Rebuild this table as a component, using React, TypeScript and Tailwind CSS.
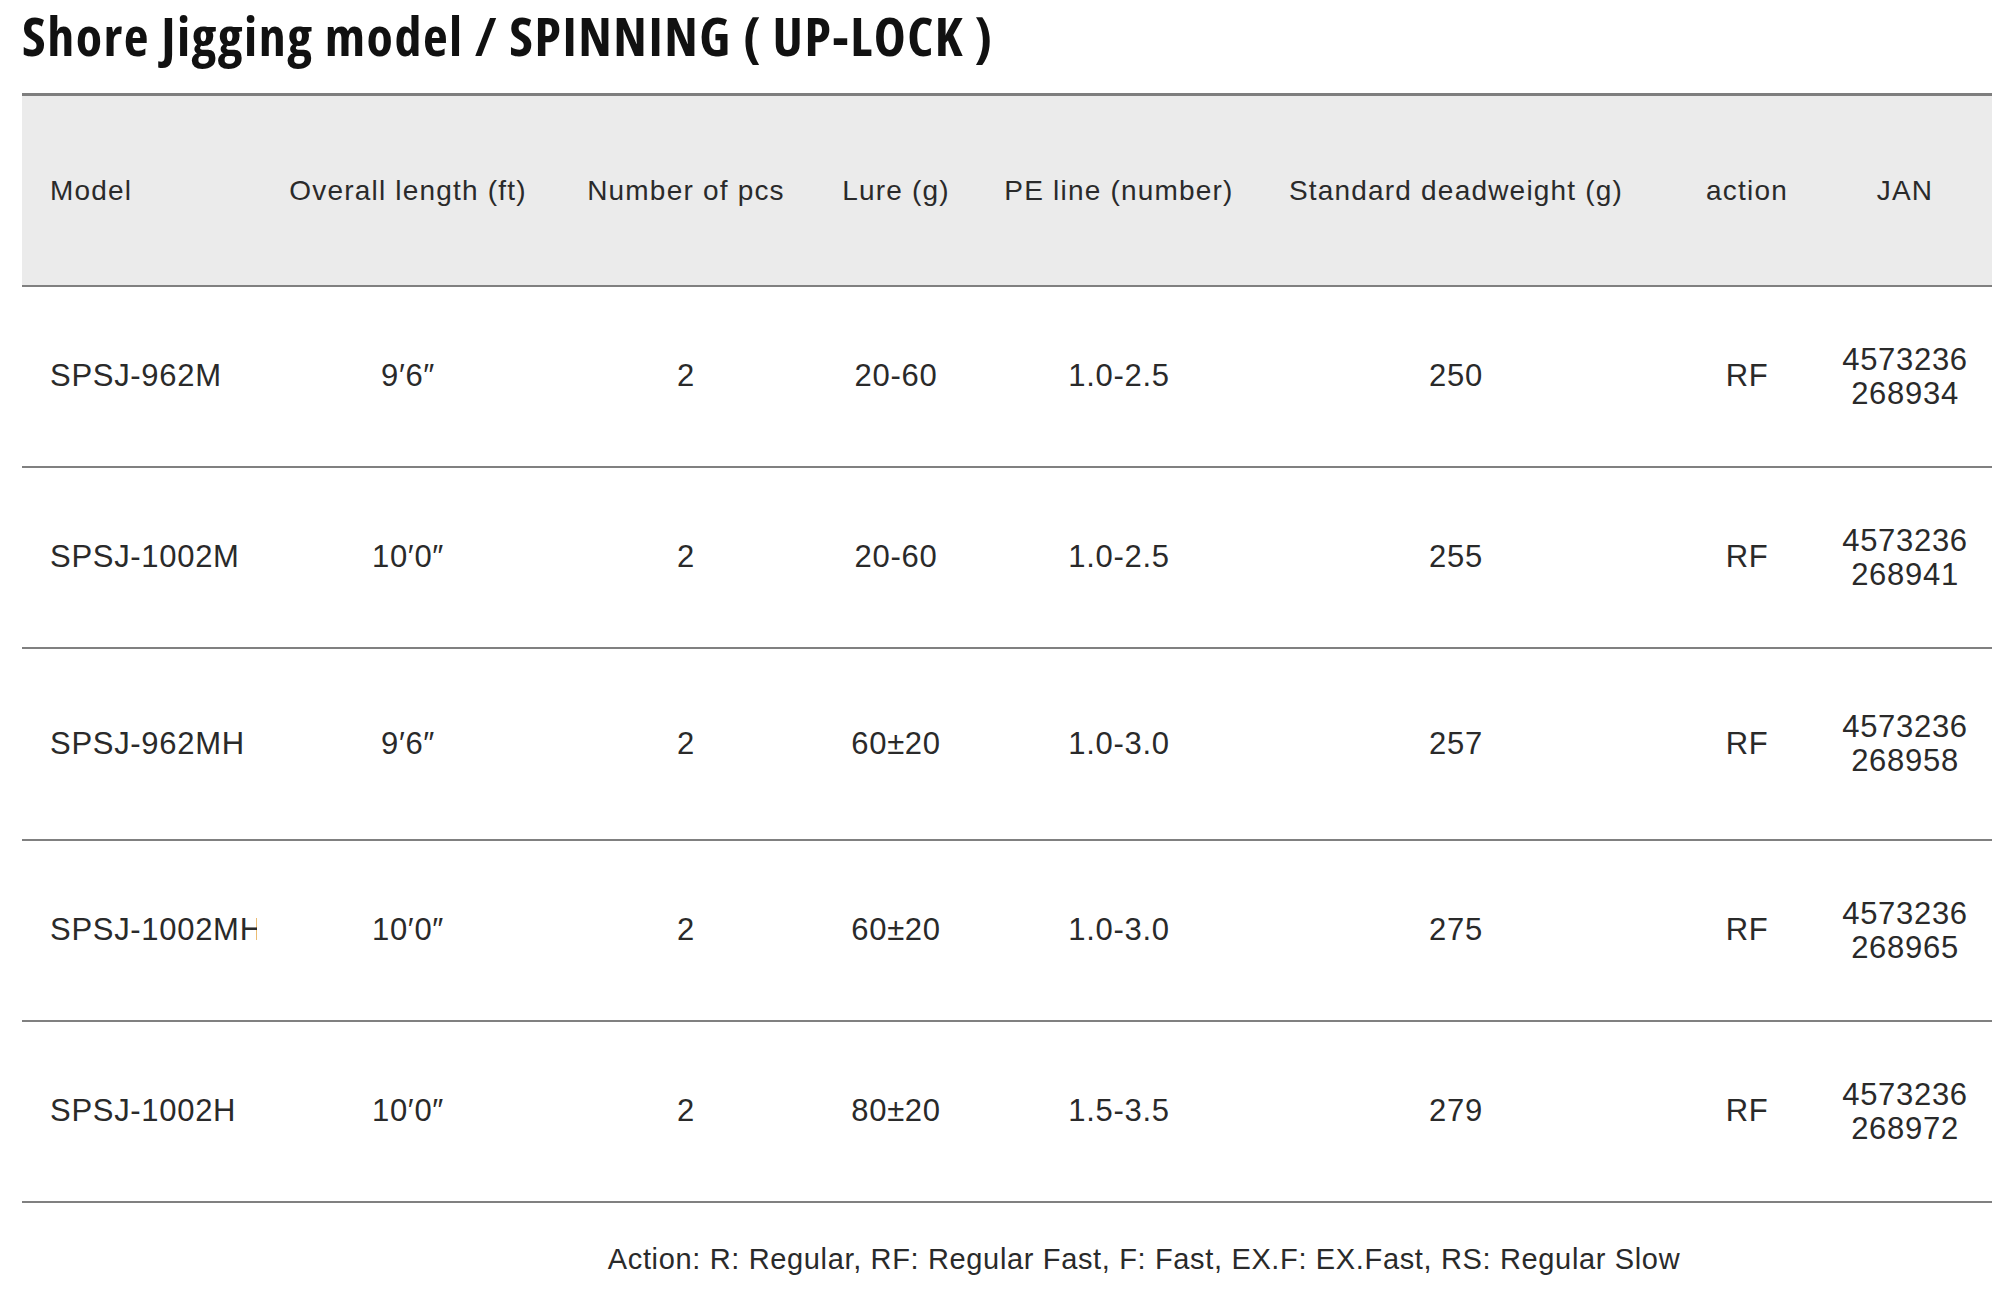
import React from "react";

type Row = {
  model: string;
  length: string;
  pcs: string;
  lure: string;
  pe: string;
  weight: string;
  action: string;
  jan1: string;
  jan2: string;
  h: string;
};

const rows: Row[] = [
  { model: "SPSJ-962M", length: "9′6″", pcs: "2", lure: "20-60", pe: "1.0-2.5", weight: "250", action: "RF", jan1: "4573236", jan2: "268934", h: "h-[181px]" },
  { model: "SPSJ-1002M", length: "10′0″", pcs: "2", lure: "20-60", pe: "1.0-2.5", weight: "255", action: "RF", jan1: "4573236", jan2: "268941", h: "h-[181px]" },
  { model: "SPSJ-962MH", length: "9′6″", pcs: "2", lure: "60±20", pe: "1.0-3.0", weight: "257", action: "RF", jan1: "4573236", jan2: "268958", h: "h-[192px]" },
  { model: "SPSJ-1002MH", length: "10′0″", pcs: "2", lure: "60±20", pe: "1.0-3.0", weight: "275", action: "RF", jan1: "4573236", jan2: "268965", h: "h-[181px]" },
  { model: "SPSJ-1002H", length: "10′0″", pcs: "2", lure: "80±20", pe: "1.5-3.5", weight: "279", action: "RF", jan1: "4573236", jan2: "268972", h: "h-[181px]" },
];

const grid =
  "grid grid-cols-[235px_302px_254px_166px_280px_394px_188px_128px] items-center pr-[23px]";

export default function App() {
  return (
    <div className="min-h-[1289px] w-[2000px] bg-white pl-[22px]">
      <h1 className="font-['Open_Sans',sans-serif] text-[54px] font-bold leading-[71px] tracking-[1.5px] text-[#111] [font-stretch:75%]">
        Shore Jigging model / SPINNING ( UP-LOCK )
      </h1>
      <div className="mt-[22px] w-[1970px] border-t-[3px] border-[#7e7e7e] font-['Liberation_Sans',sans-serif] text-[#2a2a2a]">
        <div className={`${grid} h-[191px] border-b-2 border-[#808080] bg-[#ebebeb] text-[28px] tracking-[1.2px]`}>
          <div className="pl-[28px]">Model</div>
          <div className="text-center">Overall length (ft)</div>
          <div className="text-center">Number of pcs</div>
          <div className="text-center">Lure (g)</div>
          <div className="text-center">PE line (number)</div>
          <div className="text-center">Standard deadweight (g)</div>
          <div className="text-center">action</div>
          <div className="text-center">JAN</div>
        </div>
        {rows.map((r) => (
          <div key={r.model} className={`${grid} ${r.h} border-b-2 border-[#808080] text-[31px] tracking-[0.7px]`}>
            <div className="overflow-hidden whitespace-nowrap pl-[28px]">{r.model}</div>
            <div className="text-center">{r.length}</div>
            <div className="text-center">{r.pcs}</div>
            <div className="text-center">{r.lure}</div>
            <div className="text-center">{r.pe}</div>
            <div className="text-center">{r.weight}</div>
            <div className="text-center">{r.action}</div>
            <div className="text-center leading-[34px]">
              {r.jan1}
              <br />
              {r.jan2}
            </div>
          </div>
        ))}
        <p className="mt-[40px] pl-[274px] text-center text-[29px] leading-[32px] tracking-[0.65px]">
          Action: R: Regular, RF: Regular Fast, F: Fast, EX.F: EX.Fast, RS: Regular Slow
        </p>
      </div>
    </div>
  );
}
